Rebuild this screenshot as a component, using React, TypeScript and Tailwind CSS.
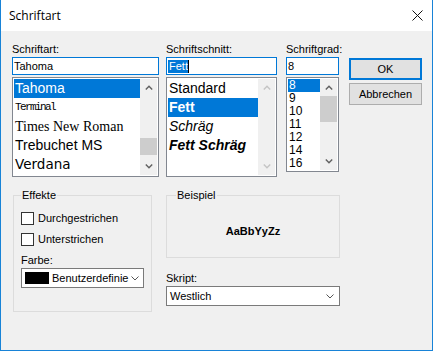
const ui = "font-['Liberation_Sans',Arial,sans-serif]"

function Arrow({ up, disabled }: { up?: boolean; disabled?: boolean }) {
  return (
    <div className="flex h-[17px] w-[17px] items-center justify-center">
      <svg width="8" height="5" viewBox="0 0 8 5">
        <path
          d={up ? 'M0.8 4.5 L4 1.3 L7.2 4.5' : 'M0.8 0.5 L4 3.7 L7.2 0.5'}
          fill="none"
          stroke={disabled ? '#c4c4c4' : '#606060'}
          strokeWidth="1.4"
        />
      </svg>
    </div>
  )
}

function ScrollBar({ thumb, disabled }: { thumb?: string; disabled?: boolean }) {
  return (
    <div className="flex w-[17px] flex-col bg-[#f0f0f0]">
      <Arrow up disabled={disabled} />
      <div className="flex-1">{thumb && <div className={thumb} />}</div>
      <Arrow disabled={disabled} />
    </div>
  )
}

function Chevron() {
  return (
    <svg width="8" height="5" viewBox="0 0 8 5">
      <path d="M0.5 0.5 L4 4 L7.5 0.5" fill="none" stroke="#555" strokeWidth="1" />
    </svg>
  )
}

function Label({ children }: { children: React.ReactNode }) {
  return <div className="h-[14px] text-[11px] leading-[13px] text-black">{children}</div>
}

function CheckRow({ text }: { text: string }) {
  return (
    <div className="flex h-[13px] items-center gap-[4px]">
      <div className="h-[13px] w-[13px] border border-[#333] bg-white" />
      <span className="text-[11px] leading-[13px]">{text}</span>
    </div>
  )
}

const fonts = [
  { name: 'Tahoma', cls: "font-['Liberation_Sans'] text-[14px]" },
  { name: 'Terminal', cls: "font-['Liberation_Mono'] text-[11px] tracking-[-1.6px]" },
  { name: 'Times New Roman', cls: "font-['Liberation_Serif'] text-[14px]" },
  { name: 'Trebuchet MS', cls: "font-['Liberation_Sans'] text-[14px]" },
  { name: 'Verdana', cls: "font-['DejaVu_Sans'] text-[13.5px]" },
]

const styles = [
  { name: 'Standard', cls: '' },
  { name: 'Fett', cls: 'font-bold' },
  { name: 'Schräg', cls: 'italic' },
  { name: 'Fett Schräg', cls: 'font-bold italic' },
]

const sizes = ['8', '9', '10', '11', '12', '14', '16']

export default function App() {
  return (
    <div className={`${ui} flex h-[351px] w-[433px] flex-col border-x border-b border-[#1883d7] bg-white text-black`}>
      <div className="flex h-[31px] shrink-0 items-center justify-between pl-[8px] pr-[9px]">
        <span className="font-['Open_Sans'] text-[12px] leading-[16px]">Schriftart</span>
        <svg width="11" height="11" viewBox="0 0 11 11">
          <path d="M0.5 0.5 L10.5 10.5 M10.5 0.5 L0.5 10.5" stroke="#111" strokeWidth="1" />
        </svg>
      </div>

      <div className="flex-1 bg-[#f0f0f0] pl-[11px] pt-[12px]">
        <div className="flex">
          <div className="w-[147px]">
            <Label>Schriftart:</Label>
            <div className="flex h-[18px] items-center border border-[#0078d7] bg-white pl-[1px] text-[11px]">Tahoma</div>
            <div className="mt-[2px] flex h-[100px] border border-[#828790] bg-white p-[1px]">
              <div className="flex-1 overflow-hidden">
                {fonts.map((f, i) => (
                  <div
                    key={f.name}
                    className={`h-[19px] whitespace-nowrap pl-[1px] leading-[19px] ${f.cls} ${i === 0 ? 'bg-[#0078d7] text-white' : ''}`}
                  >
                    {f.name}
                  </div>
                ))}
              </div>
              <ScrollBar thumb="mt-[42px] h-[17px] bg-[#cdcdcd]" />
            </div>
          </div>

          <div className="ml-[7px] w-[111px]">
            <Label>Schriftschnitt:</Label>
            <div className="flex h-[18px] items-center border border-[#0078d7] bg-white pl-[1px] pt-[1px] text-[11px]">
              <span className="h-[13px] bg-[#0078d7] pl-[1px] leading-[13px] text-white">Fett</span>
              <span className="h-[13px] w-[1px] bg-black" />
            </div>
            <div className="mt-[2px] flex h-[100px] border border-[#828790] bg-white p-[1px]">
              <div className="flex-1">
                {styles.map((s, i) => (
                  <div
                    key={s.name}
                    className={`h-[19px] whitespace-nowrap pl-[1px] text-[14px] leading-[19px] ${s.cls} ${i === 1 ? 'bg-[#0078d7] text-white' : ''}`}
                  >
                    {s.name}
                  </div>
                ))}
              </div>
              <ScrollBar disabled />
            </div>
          </div>

          <div className="ml-[9px] w-[53px]">
            <Label>Schriftgrad:</Label>
            <div className="flex h-[18px] items-center border border-[#0078d7] bg-white pl-[1px] text-[11px]">8</div>
            <div className="mt-[2px] flex h-[95px] border border-[#828790] bg-white p-[1px]">
              <div className="flex-1">
                {sizes.map((s, i) => (
                  <div
                    key={s}
                    className={`h-[13px] pl-[1px] text-[12px] leading-[13px] ${i === 0 ? 'bg-[#0078d7] text-white' : ''}`}
                  >
                    {s}
                  </div>
                ))}
              </div>
              <ScrollBar thumb="h-[26px] bg-[#cdcdcd]" />
            </div>
          </div>

          <div className="ml-[10px] mt-[15px] flex w-[73px] flex-col gap-[3px]">
            <button className="flex h-[22px] items-center justify-center border-2 border-[#0078d7] bg-[#e1e1e1] text-[11px]">
              OK
            </button>
            <button className="flex h-[22px] items-center justify-center border border-[#adadad] bg-[#e1e1e1] text-[11px]">
              Abbrechen
            </button>
          </div>
        </div>

        <div className="mt-[18px] flex">
          <div className="relative ml-[1px] h-[117px] w-[139px] border border-[#dcdcdc] pl-[7px] pt-[16px]">
            <span className="absolute -top-[7px] left-[7px] bg-[#f0f0f0] px-[1px] text-[11px] leading-[13px]">Effekte</span>
            <div className="flex flex-col gap-[8px]">
              <CheckRow text="Durchgestrichen" />
              <CheckRow text="Unterstrichen" />
            </div>
            <div className="mt-[8px] h-[14px] text-[11px] leading-[13px]">Farbe:</div>
            <div className="flex h-[20px] w-[123px] items-center border border-[#7a7a7a] bg-white pl-[3px] pr-[4px]">
              <div className="h-[12px] w-[24px] bg-black" />
              <span className="ml-[3px] flex-1 whitespace-nowrap text-[11px]">Benutzerdefinie</span>
              <Chevron />
            </div>
          </div>

          <div className="ml-[14px] w-[174px]">
            <div className="relative flex h-[63px] items-center justify-center border border-[#dcdcdc] pt-[10px]">
              <span className="absolute -top-[7px] left-[9px] bg-[#f0f0f0] px-[1px] text-[11px] leading-[13px]">Beispiel</span>
              <span className="text-[11px] font-bold">AaBbYyZz</span>
            </div>
            <div className="mt-[14px]">
              <Label>Skript:</Label>
            </div>
            <div className="flex h-[20px] items-center justify-between border border-[#7a7a7a] bg-white pl-[3px] pr-[5px] text-[11px]">
              <span>Westlich</span>
              <Chevron />
            </div>
          </div>
        </div>
      </div>
    </div>
  )
}
